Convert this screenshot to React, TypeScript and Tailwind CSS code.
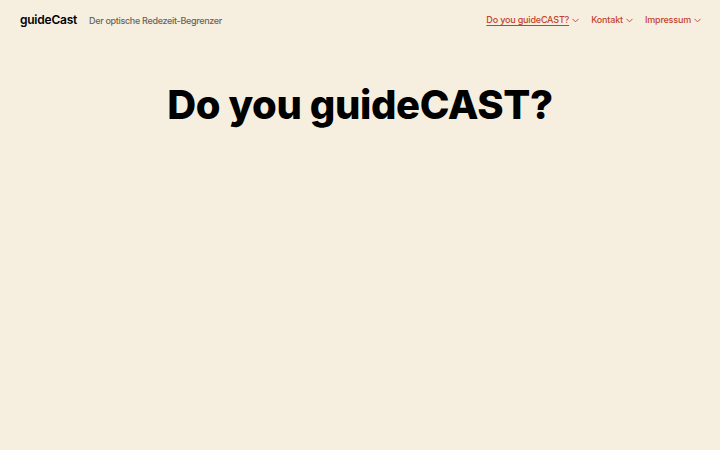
import { ChevronDown } from 'lucide-react';

const nav = [
  { label: 'Do you guideCAST?', active: true },
  { label: 'Kontakt', active: false },
  { label: 'Impressum', active: false },
];

export default function App() {
  return (
    <div
      className="min-h-[450px] w-full bg-[#f6efe0] text-black"
      style={{ fontFamily: 'Inter, "Noto Sans", sans-serif' }}
    >
      <header className="flex h-10 items-center justify-between pl-5 pr-[17px]">
        <div className="flex items-baseline gap-3">
          <span className="text-[12px] font-semibold tracking-[-0.02em]">guideCast</span>
          <span className="text-[9px] font-medium tracking-[-0.035em] text-[#6a6452]">
            Der optische Redezeit-Begrenzer
          </span>
        </div>
        <nav className="flex items-center gap-[10px]">
          {nav.map((item) => (
            <a key={item.label} className="flex items-center gap-[1px] text-[9px] font-medium tracking-[-0.02em] text-[#c4412a]">
              <span className={item.active ? 'underline underline-offset-2' : ''}>{item.label}</span>
              <ChevronDown size={11} strokeWidth={2} />
            </a>
          ))}
        </nav>
      </header>
      <main className="flex justify-center pt-[45px]">
        <h1 className="text-[40px] font-extrabold leading-none tracking-[-0.01em]">Do you guideCAST?</h1>
      </main>
    </div>
  );
}
